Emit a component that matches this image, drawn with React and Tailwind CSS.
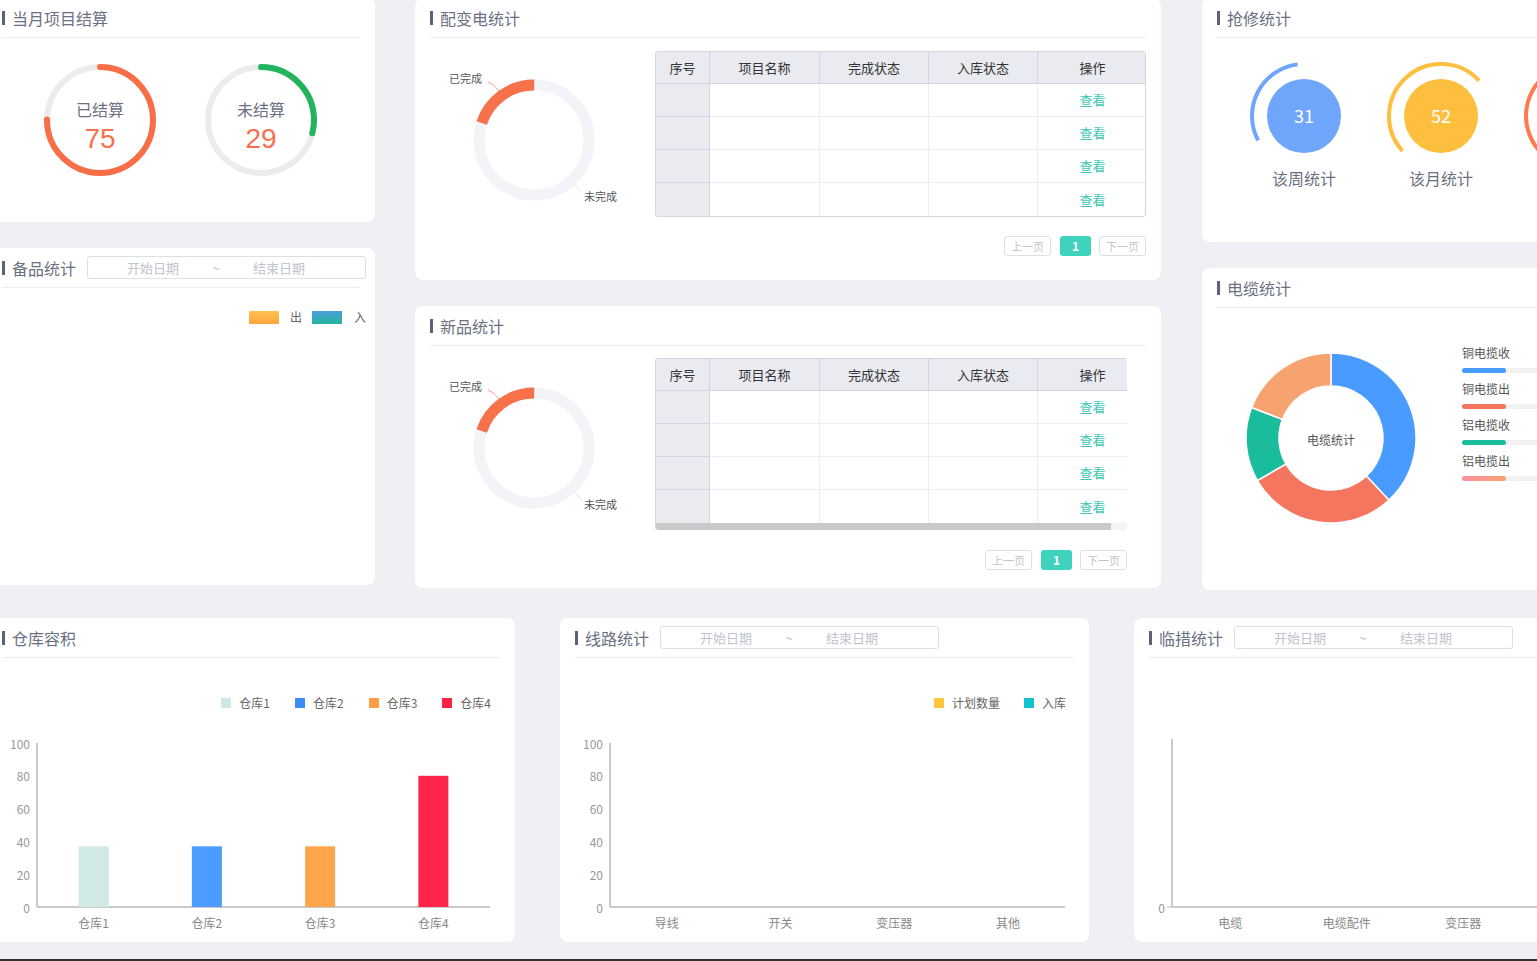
import React from 'react';

// helpers for svg arcs (angles measured clockwise from 12 o'clock)
const pt = (cx, cy, r, a) => [cx + r * Math.sin((a * Math.PI) / 180), cy - r * Math.cos((a * Math.PI) / 180)];

const arcPath = (cx, cy, r, a1, a2) => {
  const span = (((a2 - a1) % 360) + 360) % 360;
  const [x1, y1] = pt(cx, cy, r, a1);
  const [x2, y2] = pt(cx, cy, r, a2);
  return `M ${x1} ${y1} A ${r} ${r} 0 ${span > 180 ? 1 : 0} 1 ${x2} ${y2}`;
};

const sectorPath = (cx, cy, R, r, a1, a2) => {
  const span = (((a2 - a1) % 360) + 360) % 360;
  const large = span > 180 ? 1 : 0;
  const [ox1, oy1] = pt(cx, cy, R, a1);
  const [ox2, oy2] = pt(cx, cy, R, a2);
  const [ix2, iy2] = pt(cx, cy, r, a2);
  const [ix1, iy1] = pt(cx, cy, r, a1);
  return `M ${ox1} ${oy1} A ${R} ${R} 0 ${large} 1 ${ox2} ${oy2} L ${ix2} ${iy2} A ${r} ${r} 0 ${large} 0 ${ix1} ${iy1} Z`;
};

// card title row with the little bar on the left
const Title = ({ text, children }) => (
  <div className="h-[40px] shrink-0 flex items-center border-b border-[#ebeef5]">
    <span className="w-[3px] h-[14px] shrink-0 bg-[#5c6275]" />
    <span className="ml-[7px] shrink-0 text-[16px] leading-none text-[#6b7083] whitespace-nowrap">{text}</span>
    {children}
  </div>
);

const DateRange = () => (
  <div className="ml-[11px] w-[279px] h-[23px] shrink-0 border border-[#dcdfe6] rounded-[3px] flex items-center text-[13px] text-[#c0c4cc]">
    <span className="ml-[10px] w-[110px] text-center">开始日期</span>
    <span className="w-[16px] text-center">~</span>
    <span className="w-[110px] text-center">结束日期</span>
  </div>
);

const Card = ({ className, children }) => (
  <div className={`bg-white rounded-[8px] px-[15px] flex flex-col overflow-hidden ${className}`}>{children}</div>
);

// 当月项目结算 gauge
const Gauge = ({ label, value, pct, color }) => {
  const r = 53;
  const c = 2 * Math.PI * r;
  return (
    <div className="relative w-[116px] h-[116px]">
      <svg width="116" height="116" viewBox="0 0 116 116">
        <circle cx="58" cy="58" r={r} fill="none" stroke="#ececec" strokeWidth="6" />
        <circle
          cx="58"
          cy="58"
          r={r}
          fill="none"
          stroke={color}
          strokeWidth="6"
          strokeLinecap="round"
          strokeDasharray={`${c * pct} ${c}`}
          transform="rotate(-90 58 58)"
        />
      </svg>
      <div className="absolute inset-0 flex flex-col items-center pt-[37px]">
        <span className="h-[20px] text-[16px] leading-[20px] text-[#6b7083]">{label}</span>
        <span className="mt-[6px] h-[28px] text-[28px] leading-[28px] text-[#f5714f] font-['Liberation_Sans',sans-serif]">{value}</span>
      </div>
    </div>
  );
};

// 已完成 / 未完成 donut
const DoneDonut = () => {
  const r = 55;
  const c = 2 * Math.PI * r;
  return (
    <svg width="225" height="175" className="shrink-0 block">
      <circle cx="104" cy="102" r={r} fill="none" stroke="#f3f4f8" strokeWidth="11" />
      <circle
        cx="104"
        cy="102"
        r={r}
        fill="none"
        stroke="#f7714a"
        strokeWidth="11"
        strokeDasharray={`${c * 0.2} ${c}`}
        transform="rotate(198 104 102)"
      />
      <path d="M58 44 Q64 46 69 53" fill="none" stroke="#f6a48e" strokeWidth="1" />
      <text x="19" y="45" fontSize="11" fill="#555">已完成</text>
      <path d="M144 145 L152 155" fill="none" stroke="#e6e6e6" strokeWidth="1" />
      <text x="154" y="163" fontSize="11" fill="#555">未完成</text>
    </svg>
  );
};

const cols = ['序号', '项目名称', '完成状态', '入库状态', '操作'];
const colW = ['w-[54px]', 'w-[110px]', 'w-[109px]', 'w-[109px]', 'w-[109px]'];

const TableBody = () => (
  <div className="w-[491px]">
    <div className="flex h-[32px] bg-[#e9ebf0] border-b border-[#d3d6de] text-[13px] text-[#333]">
      {cols.map((c, i) => (
        <div key={c} className={`${colW[i]} shrink-0 flex items-center justify-center ${i < 4 ? 'border-r border-[#d3d6de]' : ''}`}>
          {c}
        </div>
      ))}
    </div>
    {[0, 1, 2, 3].map((row) => (
      <div key={row} className="flex h-[33px]">
        <div className={`w-[54px] shrink-0 bg-[#e9ebf0] border-r border-[#d3d6de] ${row < 3 ? 'border-b' : ''}`} />
        <div className={`w-[110px] shrink-0 border-r border-[#ebeef5] ${row < 3 ? 'border-b' : ''}`} />
        <div className={`w-[109px] shrink-0 border-r border-[#ebeef5] ${row < 3 ? 'border-b' : ''}`} />
        <div className={`w-[109px] shrink-0 border-r border-[#ebeef5] ${row < 3 ? 'border-b' : ''}`} />
        <div className={`w-[109px] shrink-0 flex items-center justify-center text-[13px] text-[#3ec8b5] border-[#ebeef5] ${row < 3 ? 'border-b' : ''}`}>
          查看
        </div>
      </div>
    ))}
  </div>
);

const Pager = ({ className }) => (
  <div className={`flex justify-end items-center ${className}`}>
    <div className="w-[47px] h-[20px] border border-[#dcdfe6] rounded-[3px] text-[11px] text-[#c0c4cc] flex items-center justify-center">上一页</div>
    <div className="ml-[9px] w-[31px] h-[20px] bg-[#3fd3bd] rounded-[3px] text-white text-[12px] font-bold flex items-center justify-center">1</div>
    <div className="ml-[8px] w-[47px] h-[20px] border border-[#dcdfe6] rounded-[3px] text-[11px] text-[#c0c4cc] flex items-center justify-center">下一页</div>
  </div>
);

// 抢修统计 ring
const RepairRing = ({ value, label, color, from, to }) => (
  <div className="w-[120px] shrink-0 flex flex-col items-center">
    <svg width="120" height="112" className="block">
      <path d={arcPath(60, 60, 52, from, to)} fill="none" stroke={color} strokeWidth="4" />
      <circle cx="60" cy="60" r="37" fill={color} />
      {value && (
        <text x="60" y="59" textAnchor="middle" dominantBaseline="central" fontSize="18" fill="#fff">{value}</text>
      )}
    </svg>
    <span className="h-[20px] text-[16px] leading-[20px] text-[#6b7083] whitespace-nowrap">{label}</span>
  </div>
);

const cableSegments = [
  [0, 137, '#4a9bff'],
  [137, 240, '#f4765e'],
  [240, 291, '#1bbc9b'],
  [291, 360, '#f7a36f'],
];

const cableLegend = [
  ['铜电揽收', 'bg-[#4a9bff]'],
  ['铜电揽出', 'bg-[#f4765e]'],
  ['铝电揽收', 'bg-[#1bbc9b]'],
  ['铝电揽出', 'bg-gradient-to-r from-[#ff8e9e] to-[#f7a36f]'],
];

// generic axis chart used by the bottom cards
const AxisChart = ({ axisX, axisEnd, top, ticks, cats, slots, bars = [], tick0 }) => {
  const bottom = 174;
  const step = (axisEnd - axisX) / (slots || cats.length);
  const yOf = (v) => bottom - (v / 100) * (bottom - 10);
  return (
    <svg width="490" height="202" className="block shrink-0">
      {ticks.map((t) => (
        <text key={t} x={axisX - 7} y={yOf(t)} textAnchor="end" dominantBaseline="central" fontSize="12" fill="#999">
          {t}
        </text>
      ))}
      {tick0 && <line x1={axisX - 5} y1={bottom} x2={axisX} y2={bottom} stroke="#b8b8b8" strokeWidth="1" />}
      <line x1={axisX} y1={top} x2={axisX} y2={bottom} stroke="#b8b8b8" strokeWidth="1.5" />
      <line x1={axisX} y1={bottom} x2={axisEnd} y2={bottom} stroke="#b8b8b8" strokeWidth="1.5" />
      {bars.map((b, i) => {
        const cx = axisX + step * (i + 0.5);
        return <rect key={i} x={cx - 15} y={yOf(b.v)} width="30" height={bottom - yOf(b.v)} fill={b.color} />;
      })}
      {cats.map((c, i) => (
        <text key={c + i} x={axisX + step * (i + 0.5)} y="189" textAnchor="middle" dominantBaseline="central" fontSize="12" fill="#888">
          {c}
        </text>
      ))}
    </svg>
  );
};

const LegendSq = ({ color, label, className = '' }) => (
  <div className={`flex items-center ${className}`}>
    <span className={`w-[10px] h-[10px] ${color}`} />
    <span className="ml-[8px] text-[12px] text-[#666] leading-none">{label}</span>
  </div>
);

export default function App() {
  return (
    <div className="w-[1537px] h-[961px] overflow-hidden bg-[#eef0f4] flex flex-col font-['Noto_Sans_CJK_SC','Liberation_Sans',sans-serif]">
      <div className="flex-1 overflow-hidden">
        <div className="-mt-[2px] -ml-[13px] w-[1620px]">
          {/* top area */}
          <div className="flex items-start h-[592px]">
            <div className="w-[388px] shrink-0 flex flex-col gap-[26px]">
              <Card className="h-[224px]">
                <Title text="当月项目结算" />
                <div className="flex pl-[40px] gap-[45px] mt-[24px]">
                  <Gauge label="已结算" value="75" pct={0.75} color="#f86f47" />
                  <Gauge label="未结算" value="29" pct={0.29} color="#22b35e" />
                </div>
              </Card>
              <Card className="h-[337px]">
                <Title text="备品统计">
                  <DateRange />
                </Title>
                <div className="flex justify-end items-center mt-[22px] h-[14px] -mr-[6px]">
                  <span className="w-[30px] h-[13px] bg-gradient-to-b from-[#ffc255] to-[#ffa53c]" />
                  <span className="ml-[11px] text-[12px] text-[#666] leading-none">出</span>
                  <span className="ml-[10px] w-[30px] h-[13px] bg-gradient-to-b from-[#4a9fdc] to-[#22b39c]" />
                  <span className="ml-[12px] text-[12px] text-[#666] leading-none">入</span>
                </div>
              </Card>
            </div>

            <div className="ml-[40px] w-[746px] shrink-0 flex flex-col gap-[26px]">
              <Card className="h-[282px]">
                <Title text="配变电统计" />
                <div className="flex items-start">
                  <DoneDonut />
                  <div className="mt-[13px] w-[491px]">
                    <div className="w-[491px] border border-[#d3d6de] rounded-[3px] overflow-hidden">
                      <TableBody />
                    </div>
                    <Pager className="mt-[19px]" />
                  </div>
                </div>
              </Card>
              <Card className="h-[282px]">
                <Title text="新品统计" />
                <div className="flex items-start">
                  <DoneDonut />
                  <div className="mt-[12px] w-[472px]">
                    <div className="w-[472px] border-l border-t border-[#d3d6de] rounded-[3px] overflow-hidden">
                      <TableBody />
                      <div className="h-[7px] bg-[#f4f4f4]">
                        <div className="w-[455px] h-[7px] bg-[#c9c9c9]" />
                      </div>
                    </div>
                    <Pager className="mt-[20px]" />
                  </div>
                </div>
              </Card>
            </div>

            <div className="ml-[41px] w-[400px] shrink-0 flex flex-col gap-[26px]">
              <Card className="h-[244px]">
                <Title text="抢修统计" />
                <div className="flex pl-[27px] gap-[17px] mt-[18px]">
                  <RepairRing value="31" label="该周统计" color="#70a5fc" from={242} to={353} />
                  <RepairRing value="52" label="该月统计" color="#fdbf3d" from={228} to={47} />
                  <RepairRing label="" color="#ff7b4f" from={200} to={40} />
                </div>
              </Card>
              <Card className="h-[322px]">
                <Title text="电缆统计" />
                <div className="flex items-start">
                  <svg width="180" height="180" className="block shrink-0 ml-[24px] mt-[40px]">
                    {cableSegments.map(([a1, a2, color]) => (
                      <path key={color} d={sectorPath(90, 90, 85, 52, a1, a2)} fill={color} stroke="#fff" strokeWidth="1.5" />
                    ))}
                    <text x="90" y="91" textAnchor="middle" dominantBaseline="central" fontSize="12" fill="#555">电缆统计</text>
                  </svg>
                  <div className="ml-[41px] mt-[36px] flex flex-col">
                    {cableLegend.map(([label, color]) => (
                      <div key={label} className="h-[36px]">
                        <div className="text-[12px] leading-[18px] text-[#555]">{label}</div>
                        <div className="mt-[6px] w-[120px] h-[5px] rounded-full bg-[#f2f2f2]">
                          <div className={`w-[44px] h-[5px] rounded-full ${color}`} />
                        </div>
                      </div>
                    ))}
                  </div>
                </div>
              </Card>
            </div>
          </div>

          {/* bottom row */}
          <div className="flex mt-[28px]">
            <Card className="w-[528px] h-[324px] shrink-0">
              <Title text="仓库容积" />
              <div className="flex justify-end items-center mt-[37px] h-[16px] mr-[9px]">
                <LegendSq color="bg-[#cde8e6]" label="仓库1" />
                <LegendSq color="bg-[#3b8cf5]" label="仓库2" className="ml-[25px]" />
                <LegendSq color="bg-[#ff9c45]" label="仓库3" className="ml-[25px]" />
                <LegendSq color="bg-[#ff2247]" label="仓库4" className="ml-[25px]" />
              </div>
              <div className="mt-[22px]">
                <AxisChart
                  axisX={35}
                  axisEnd={488}
                  top={10}
                  ticks={[0, 20, 40, 60, 80, 100]}
                  cats={['仓库1', '仓库2', '仓库3', '仓库4']}
                  bars={[
                    { v: 37, color: '#d0e8e6' },
                    { v: 37, color: '#4c9bff' },
                    { v: 37, color: '#ffa54c' },
                    { v: 80, color: '#ff2449' },
                  ]}
                />
              </div>
            </Card>

            <Card className="ml-[45px] w-[529px] h-[324px] shrink-0">
              <Title text="线路统计">
                <DateRange />
              </Title>
              <div className="flex justify-end items-center mt-[37px] h-[16px] mr-[8px]">
                <LegendSq color="bg-[#ffc53d]" label="计划数量" />
                <LegendSq color="bg-[#14c2cf]" label="入库" className="ml-[24px]" />
              </div>
              <div className="mt-[22px]">
                <AxisChart
                  axisX={35}
                  axisEnd={490}
                  top={10}
                  ticks={[0, 20, 40, 60, 80, 100]}
                  cats={['导线', '开关', '变压器', '其他']}
                />
              </div>
            </Card>

            <Card className="ml-[45px] w-[520px] h-[324px] shrink-0">
              <Title text="临措统计">
                <DateRange />
              </Title>
              <div className="mt-[75px]">
                <AxisChart
                  axisX={23}
                  axisEnd={489}
                  top={6}
                  ticks={[0]}
                  tick0
                  slots={4}
                  cats={['电缆', '电缆配件', '变压器']}
                />
              </div>
            </Card>
          </div>
        </div>
      </div>
      <div className="h-[2px] shrink-0 bg-[#333]" />
    </div>
  );
}
